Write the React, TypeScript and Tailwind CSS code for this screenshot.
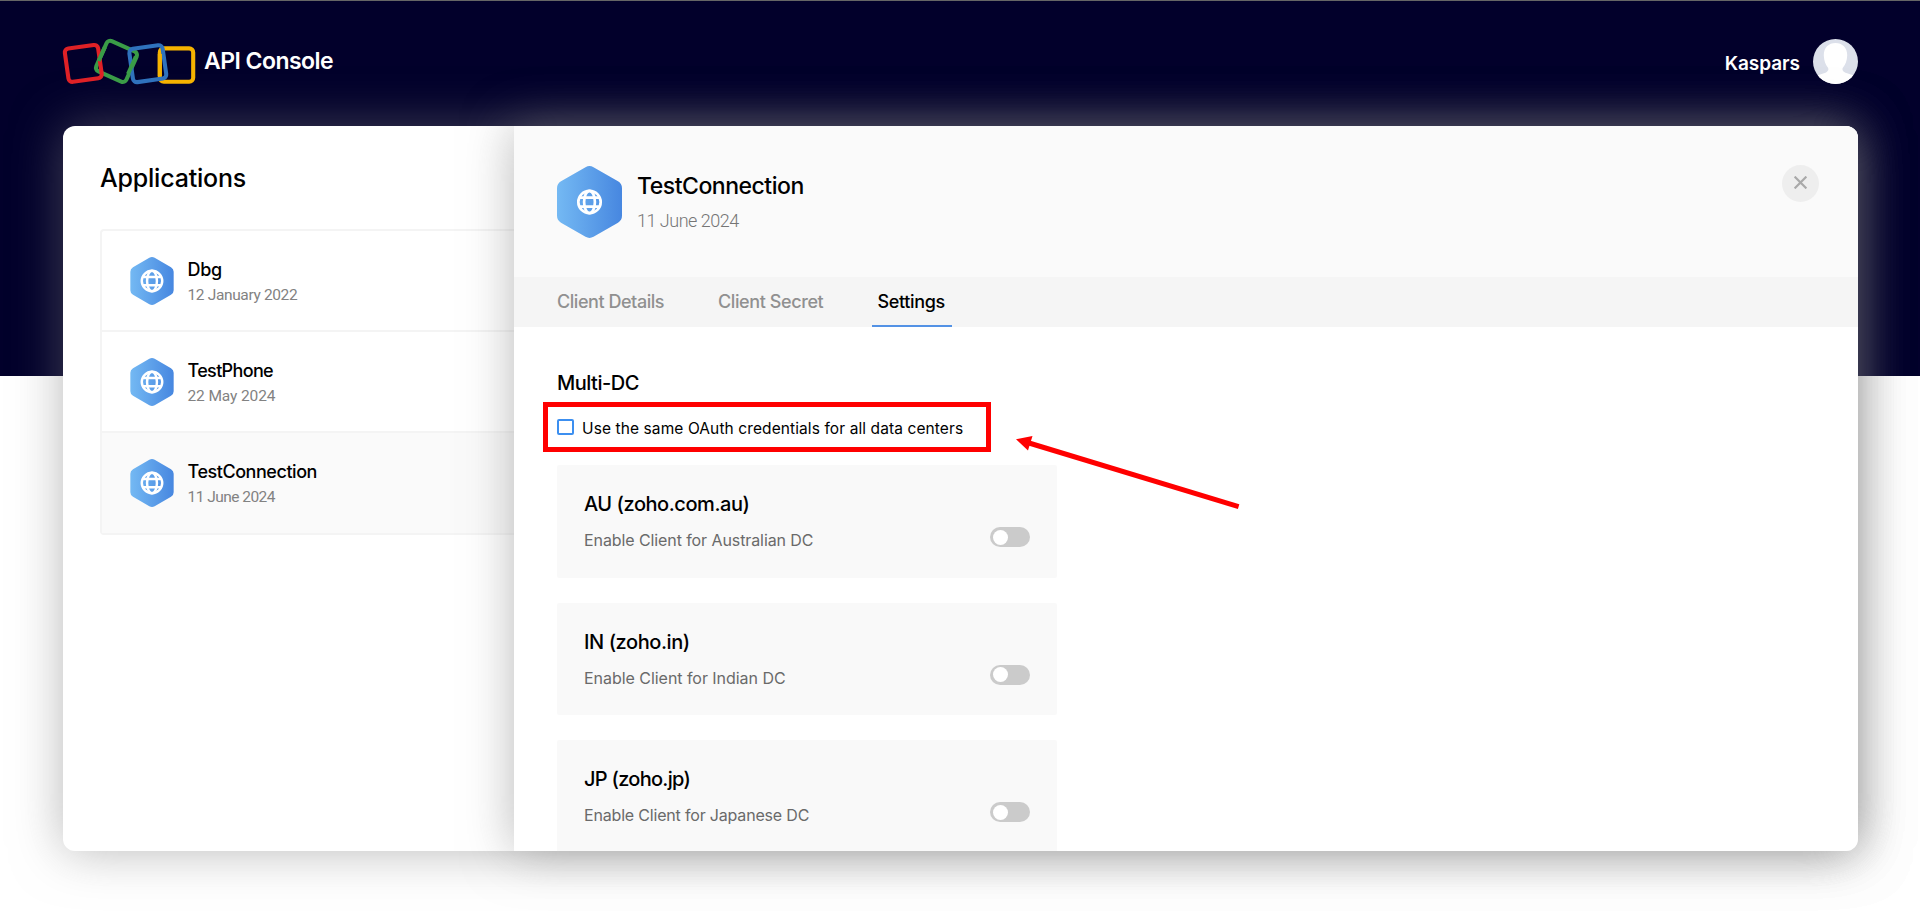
import React from 'react';

type App = { name: string; date: string; nameTracking: string; dateTracking: string; active?: boolean };

const apps: App[] = [
  { name: 'Dbg', date: '12 January 2022', nameTracking: 'tracking-[-0.3px]', dateTracking: 'tracking-[-0.36px]' },
  { name: 'TestPhone', date: '22 May 2024', nameTracking: 'tracking-[-0.66px]', dateTracking: 'tracking-[-0.12px]' },
  { name: 'TestConnection', date: '11 June 2024', nameTracking: 'tracking-[-0.45px]', dateTracking: 'tracking-[-0.53px]', active: true },
];

const centers = [
  { title: 'AU (zoho.com.au)', text: 'Enable Client for Australian DC', titleTracking: 'tracking-[-0.45px]', textTracking: 'tracking-[-0.09px]' },
  { title: 'IN (zoho.in)', text: 'Enable Client for Indian DC', titleTracking: 'tracking-[-0.42px]', textTracking: 'tracking-[-0.04px]' },
  { title: 'JP (zoho.jp)', text: 'Enable Client for Japanese DC', titleTracking: 'tracking-[-0.72px]', textTracking: 'tracking-[-0.18px]' },
];

function HexIcon({ id, className, globe }: { id: string; className: string; globe: number }) {
  return (
    <svg viewBox="0 0 65 72" className={className} aria-hidden="true">
      <defs>
        <linearGradient id={id} x1="0" y1="0" x2="1" y2="0">
          <stop offset="0" stopColor="#74b9f3" />
          <stop offset="1" stopColor="#4787e0" />
        </linearGradient>
      </defs>
      <path
        d="M28.5 1.2Q32.5 -1.1 36.5 1.2L61 15.3Q65 17.6 65 22.2V49.8Q65 54.4 61 56.7L36.5 70.8Q32.5 73.1 28.5 70.8L4 56.7Q0 54.4 0 49.8V22.2Q0 17.6 4 15.3Z"
        fill={`url(#${id})`}
      />
      <g transform={`translate(32.5 36) scale(${globe})`} fill="none" stroke="#fff" strokeWidth="2.7">
        <circle r="11.2" />
        <ellipse rx="5.4" ry="11.2" />
        <path d="M-10.5 -4.3H10.5M-10.5 4.6H10.5" />
      </g>
    </svg>
  );
}

function Logo() {
  return (
    <svg viewBox="60 36 140 52" className="h-[52px] w-[140px]" fill="none" strokeWidth="4.1" aria-hidden="true">
      <rect x="159.8" y="48.4" width="33.4" height="33.4" rx="4" stroke="#f6b300" />
      <rect x="-16.5" y="-16.5" width="33" height="33" rx="4" stroke="#3a9c47" transform="translate(116.5 61.4) rotate(24)" />
      <rect x="-16.8" y="-16.8" width="33.6" height="33.6" rx="4" stroke="#df2126" transform="translate(83.3 63.4) rotate(-8)" />
      <rect x="-16.8" y="-16.8" width="33.6" height="33.6" rx="4" stroke="#2f72bd" transform="translate(147.8 63.7) rotate(-8)" />
      <path d="M98.600 61L105 46.800M135.900 56.500L128 74" stroke="#3a9c47" />
      <path d="M159.8 54V76" stroke="#f6b300" />
    </svg>
  );
}

export default function App() {
  return (
    <div className="relative h-[912px] w-[1920px] overflow-hidden border-t border-[#666] bg-[linear-gradient(#02002b_375px,#ffffff_375px)] font-['Inter',sans-serif] text-black">
      <header className="flex h-[125px] items-start pl-[60px] pr-[62px] text-white">
        <div className="mt-[35px]">
          <Logo />
        </div>
        <div className="ml-[4px] mt-[46px] text-[23px] font-semibold leading-7 tracking-[-0.55px]">API Console</div>
        <div className="ml-auto mt-[51px] text-[19px] font-semibold leading-6 tracking-[-0.04px]">Kaspars</div>
        <svg viewBox="0 0 45 45" className="ml-[13px] mt-[38px] size-[45px]" aria-hidden="true">
          <defs>
            <clipPath id="avatar">
              <circle cx="22.5" cy="22.5" r="22.5" />
            </clipPath>
          </defs>
          <g clipPath="url(#avatar)">
            <rect width="45" height="45" fill="#dce0ea" />
            <path
              d="M22.5 4C29.5 4 34.4 9 34.2 16.5C34 22 32.5 25.500 29.800 28.800C28.800 31 30 32.500 32.500 33.800L41 36.500V46H4V36.500L12.500 33.800C15 32.500 16 31 15 28.800C12.500 25.500 11 22 10.800 16.500C10.600 9 15.500 4 22.500 4Z"
              fill="#fff"
            />
          </g>
        </svg>
      </header>

      <div className="ml-[63px] flex h-[725px] w-[1795px] rounded-xl bg-white shadow-[0_0_50px_rgba(123,123,123,0.53)]">
        <aside className="w-[451px] shrink-0 pl-[37px] pt-[36px]">
          <h1 className="text-[25px] font-medium leading-8 tracking-[-0.21px]">Applications</h1>
          <ul className="mt-[35px] rounded-l-sm border-2 border-r-0 border-[#f4f4f4]">
            {apps.map((a, i) => (
              <li
                key={a.name}
                className={
                  'flex items-start gap-[13.5px] border-[#f4f4f4] pl-[28px] pt-[26px] ' +
                  (a.active ? 'h-[100px] bg-[#fafafa]' : 'h-[101px] border-b-2')
                }
              >
                <HexIcon id={`hex-${i}`} className="h-12 w-11" globe={1.37} />
                <div className="mt-[1px]">
                  <div className={'text-[18px] font-[550] leading-6 ' + a.nameTracking}>{a.name}</div>
                  <div className={"mt-[3px] font-['Roboto',sans-serif] text-[15.5px] leading-5 text-[#828282] " + a.dateTracking}>{a.date}</div>
                </div>
              </li>
            ))}
          </ul>
        </aside>

        <main className="flex w-[1344px] flex-col overflow-hidden rounded-r-xl bg-white shadow-[0_0_50px_rgba(123,123,123,0.53)]">
          <div className="flex h-[151px] shrink-0 items-start bg-[#fafafa] pl-[43px] pr-[39px] pt-[40px]">
            <HexIcon id="hex-main" className="h-[72px] w-[65px]" globe={1} />
            <div className="ml-[15px] mt-[6px]">
              <h2 className="text-[23px] font-[550] leading-7 tracking-[-0.48px]">TestConnection</h2>
              <div className="mt-[9px] font-['Roboto',sans-serif] text-[18px] font-light leading-6 tracking-[-0.5px] text-[#757575]">11 June 2024</div>
            </div>
            <button className="ml-auto mt-[-1.5px] flex size-[37px] items-center justify-center rounded-full bg-[#eeeeee]" aria-label="Close">
              <svg viewBox="0 0 13 13" className="mb-[2px] size-[13px]" stroke="#a9a9a9" strokeWidth="2.2" aria-hidden="true">
                <path d="M.6 .6L12.4 12.4M12.4 .6L.6 12.4" />
              </svg>
            </button>
          </div>
          <nav className="flex h-[50px] shrink-0 bg-[#f5f5f5] pl-[43px] text-[18px] font-[550] leading-6 text-[#909090]">
            <div className="w-[161px] pt-[13px] tracking-[-0.45px]">Client Details</div>
            <div className="w-[154px] pt-[13px] tracking-[-0.4px]">Client Secret</div>
            <div className="w-[80px] border-b-2 border-[#5392e5] pl-[5.5px] pt-[13px] tracking-[-0.36px] text-black">Settings</div>
          </nav>
          <section className="pl-[43px] pt-[44px]">
            <h3 className="text-[20px] font-[550] leading-6 tracking-[-0.5px]">Multi-DC</h3>
            <div className="mt-[24px] flex gap-[8px]">
              <span className="h-4 w-[17px] rounded-xs border-2 border-[#3c8ff0]" />
              <span className="text-[15.5px] leading-5 tracking-[0.1px]">Use the same OAuth credentials for all data centers</span>
            </div>
            <div className="mt-[26px] flex flex-col gap-[25px]">
              {centers.map((c) => (
                <div key={c.title} className="h-[112.5px] w-[500px] rounded-xs bg-[#f9f9f9] px-[27px] pt-[27px]">
                  <div className={'text-[20px] font-[550] leading-6 ' + c.titleTracking}>{c.title}</div>
                  <div className="mt-[11px] flex items-start justify-between">
                    <div className={'pt-[3px] text-[16px] leading-5 text-[#6a6a6a] ' + c.textTracking}>{c.text}</div>
                    <div className="flex h-5 w-10 items-center rounded-full bg-[#cbcbcb] pl-[3px]">
                      <span className="size-[15px] rounded-full bg-white" />
                    </div>
                  </div>
                </div>
              ))}
            </div>
          </section>
        </main>
      </div>

      <div className="absolute left-[543px] top-[401px] h-[50px] w-[448px] border-[5px] border-[#ff0000]" />
      <svg className="absolute left-[1010px] top-[429px] h-[90px] w-[240px]" viewBox="1010 430 240 90" aria-hidden="true">
        <path d="M1029 443L1238.600 506.600" stroke="#f00" strokeWidth="5" />
        <path d="M1016 439.200L1032.500 436L1028 450.500Z" fill="#f00" />
      </svg>
    </div>
  );
}
